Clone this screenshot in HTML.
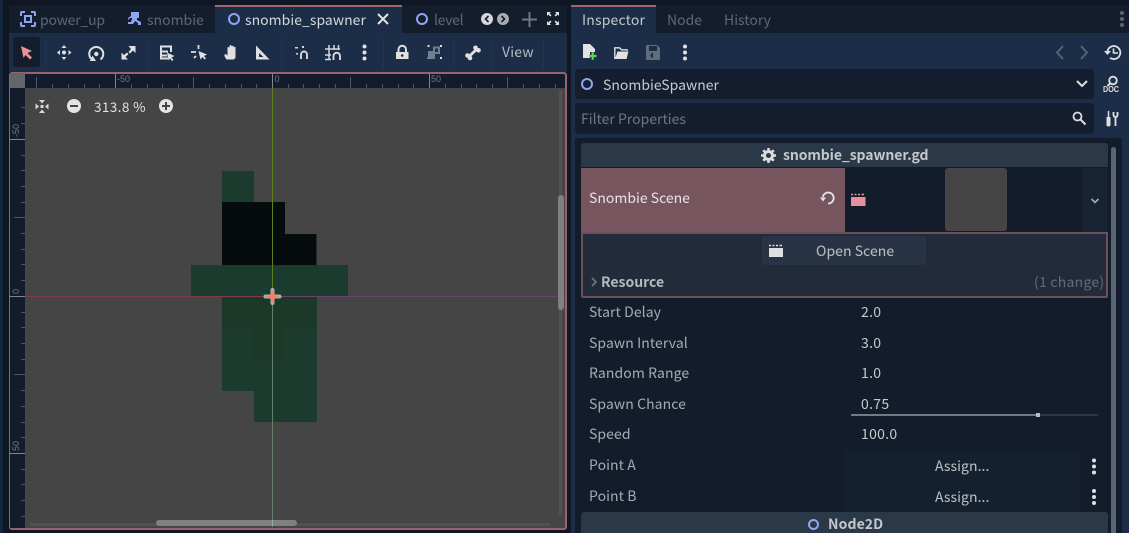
<!DOCTYPE html>
<html><head><meta charset="utf-8">
<style>
html,body{margin:0;padding:0;background:#0f1724;}
#r{position:relative;width:1129px;height:533px;overflow:hidden;background:#0f1724;font-family:"Noto Sans CJK JP","Liberation Sans",sans-serif;font-size:14px;}
#r div,#r svg{position:absolute;}
.t{white-space:nowrap;line-height:20px;height:20px;}
.l{color:#a5abb2;left:589px;letter-spacing:.08px;}
.v{color:#c6cace;left:861px;letter-spacing:.3px;}
.tab{color:#5b6877;letter-spacing:0;}
</style></head><body><div id="r">
<div style="left:0;top:0;width:3px;height:533px;background:#16263d"></div>
<div style="left:9px;top:5px;width:558px;height:28px;background:#141d2c"></div>
<div style="left:9px;top:33px;width:558px;height:39px;background:#1b2d47"></div>
<div style="left:215px;top:5px;width:187px;height:28px;background:#1b2d47"></div>
<div style="left:215px;top:5px;width:187px;height:2px;background:#a3656f"></div>
<svg style="left:20px;top:11px" width="16" height="16" viewBox="0 0 16 16"><path d="M1 5V2Q1 1 2 1H5M11 1H14Q15 1 15 2V5M15 11V14Q15 15 14 15H11M5 15H2Q1 15 1 14V11" fill="none" stroke="#8da5f3" stroke-width="2"/><rect x="5" y="5" width="6" height="6" fill="none" stroke="#8da5f3" stroke-width="2"/></svg>
<div class="t tab" style="left:40px;top:10px;letter-spacing:-.2px">power_up</div>
<svg style="left:128px;top:12px" width="14" height="14" viewBox="128 12 14 14"><path d="M131 12H139V18H137V20L141 22V25H138V23L135 21L133 24H128V22H131L132 19V18H130L128 20V18L131 16Z" fill="#8da5f3"/></svg>
<div class="t tab" style="left:147px;top:10px">snombie</div>
<svg style="left:227px;top:12px" width="14" height="14"><circle cx="7" cy="7" r="5" fill="none" stroke="#8da5f3" stroke-width="2"/></svg>
<div class="t" style="left:245px;top:10px;color:#d3d7dc;letter-spacing:.03px">snombie_spawner</div>
<svg style="left:377px;top:13px" width="12" height="12"><path d="M1 1L11 11M11 1L1 11" stroke="#e3e5e8" stroke-width="2"/></svg>
<svg style="left:415px;top:12px" width="14" height="14"><circle cx="7" cy="7" r="5" fill="none" stroke="#8da5f3" stroke-width="2"/></svg>
<div class="t tab" style="left:434px;top:10px;letter-spacing:-.3px">level</div>
<svg style="left:481px;top:13px" width="12" height="12"><circle cx="6" cy="6" r="6" fill="#d5d7da"/><path d="M7.500 3L4.500 6L7.500 9" fill="none" stroke="#141d2c" stroke-width="1.600"/></svg>
<svg style="left:497px;top:13px" width="12" height="12"><circle cx="6" cy="6" r="6" fill="#a9adb1"/><path d="M4.500 3L7.500 6L4.500 9" fill="none" stroke="#141d2c" stroke-width="1.600"/></svg>
<svg style="left:522px;top:12px" width="15" height="15"><path d="M7.500 0V15M0 7.500H15" stroke="#6f7884" stroke-width="2"/></svg>
<svg style="left:546px;top:11px" width="14" height="15" viewBox="0 0 14 15"><path d="M1 5V1H5L3.600 2.400L5.500 4.300L4.300 5.500L2.400 3.600ZM13 5V1H9L10.400 2.400L8.500 4.300L9.700 5.500L11.600 3.600ZM1 10V14H5L3.600 12.600L5.500 10.700L4.300 9.500L2.400 11.400ZM13 10V14H9L10.400 12.600L8.500 10.700L9.700 9.500L11.600 11.400Z" fill="#e0e0e0"/></svg>
<div style="left:13px;top:37px;width:27px;height:30px;background:#141d2b;border-radius:3px"></div>
<div style="left:45px;top:37px;width:1px;height:31px;background:#24364f"></div>
<div style="left:147px;top:37px;width:1px;height:31px;background:#24364f"></div>
<div style="left:281px;top:37px;width:1px;height:31px;background:#24364f"></div>
<div style="left:383px;top:37px;width:1px;height:31px;background:#24364f"></div>
<div style="left:453px;top:37px;width:1px;height:31px;background:#24364f"></div>
<div style="left:491px;top:37px;width:1px;height:31px;background:#24364f"></div>
<div style="left:543px;top:37px;width:1px;height:31px;background:#24364f"></div>
<svg style="left:0;top:0;width:600px;height:80px" width="600" height="80">
<path d="M21 46L32 51L27.500 53L32 57.500L30 59.500L25.500 55L23.500 58Z" fill="#e7919e"/>
<g fill="#e0e0e0"><path d="M64 45L66.500 48H61.500ZM64 60L61.500 57H66.500ZM57 52.500L60 50V55ZM71.500 52.500L68.500 50V55Z"/><circle cx="64" cy="52.500" r="2"/></g>
<path d="M92 59.500A7 7 0 1 1 100.500 59.500" fill="none" stroke="#e0e0e0" stroke-width="2"/><circle cx="96.300" cy="54" r="2.200" fill="#e0e0e0"/><path d="M90 61H96L92.500 55.500Z" fill="#e0e0e0"/>
<path d="M128.500 46H135.500V53L133 50.500L130 53.500L128.500 52L131 49ZM128 59.500H121.500V52.500L124 55L127 52.500L128.500 54L125.500 57Z" fill="#e0e0e0"/>
<path d="M160 45.500H172V52H170V47.500H162V50.500H168V52.500H162V54.500H167V56.500H162V57.500H168V59.500H160Z" fill="#e0e0e0"/><path d="M167 52.500L174.500 56L171.500 57.500L173.500 60L172 61L170 58.500L168.500 60.500Z" fill="#e0e0e0"/>
<path d="M198.500 45V49M191 52H196M194 58L196 56" fill="none" stroke="#e0e0e0" stroke-width="1.800"/><path d="M198.500 51L207 54.500L204 56L206 58.500L204.500 59.500L202.500 57L200.500 59.500Z" fill="#e0e0e0"/>
<g transform="translate(1.500 -.5)"><path d="M225 60C223 57 222 55 224 54.500L226 56V48.500A1 1 0 0 1 228 48.500V46.500A1 1 0 0 1 230 46.500V47A1 1 0 0 1 232 47.500V48A1 1 0 0 1 234 48.500V57Q234 60 231 60Z" fill="#e0e0e0"/></g>
<path d="M256 45.500V59.500H269.500ZM259 53L263.500 57H259Z" fill="#e0e0e0" fill-rule="evenodd"/>
<path d="M301 59V54.500A3 3 0 0 1 307 54.500V59" fill="none" stroke="#d8d8d8" stroke-width="1.900"/><path d="M295 47H298V48.500H295ZM296 53H298V54.500H296ZM302 46H304V48H302Z" fill="#d8d8d8"/>
<path d="M325 49H340M325 55H331M329 45V60M334 45V50M338.500 45V50M325 59.500H331" fill="none" stroke="#d8d8d8" stroke-width="1.500"/><path d="M333.500 60V56A3.200 3.200 0 0 1 340 56V60" fill="none" stroke="#d8d8d8" stroke-width="1.900"/>
<g fill="#e0e0e0"><circle cx="364.500" cy="46.500" r="2"/><circle cx="364.500" cy="52.500" r="2"/><circle cx="364.500" cy="58.500" r="2"/></g>
<path d="M396 52H408.500V59H396Z" fill="#e0e0e0"/><path d="M398.500 52V49.500A3.700 3.700 0 0 1 406 49.500V52" fill="none" stroke="#e0e0e0" stroke-width="2"/><circle cx="402.200" cy="55.500" r="1.300" fill="#1b2d47"/>
<path d="M427.500 45H429.500V47H427.500ZM440 45H442V47H440ZM427.500 57H429.500V59H427.500ZM440 57H442V59H440Z" fill="#e0e0e0"/><path d="M433 46.500H440V54H435V59H428V51H433Z" fill="#6f7f90"/><path d="M435 48.500V52H438V48.500Z" fill="#1b2d47"/>
<g fill="#e0e0e0"><path d="M470 57.500L468 55.500L476 48L478 50Z"/><circle cx="467.500" cy="55.500" r="2.300"/><circle cx="470" cy="58" r="2.300"/><circle cx="475.500" cy="47.800" r="2.300"/><circle cx="478.500" cy="50.300" r="2.300"/></g>
</svg>
<div class="t" style="left:502px;top:42px;color:#b6bbc1;letter-spacing:.2px">View</div>
<div style="left:9px;top:72px;width:558px;height:458px;box-sizing:border-box;border:1px solid #96636f;border-width:2px 2px 2px 1px;border-radius:3px;background:#131c2c"></div>
<div style="left:10px;top:73px;width:15px;height:15px;background:#626569"></div>
<div style="left:25px;top:88px;width:540px;height:440px;background:#454545"></div>
<svg style="left:0;top:0" width="570" height="533" id="ruler">
<g stroke="#4c5866" stroke-width="1">
<path d="M36.500 84V88M52.500 84V88M68.500 84V88M84.500 84V88M99.500 84V88M131.500 84V88M147.500 84V88M162.500 84V88M178.500 84V88M209.500 84V88M225.500 84V88M241.500 84V88M256.500 84V88M288.500 84V88M303.500 84V88M319.500 84V88M335.500 84V88M366.500 84V88M382.500 84V88M398.500 84V88M413.500 84V88M445.500 84V88M461.500 84V88M476.500 84V88M492.500 84V88M523.500 84V88M539.500 84V88M555.500 84V88"/>
<path d="M36.500 77V88M193.500 77V88M350.500 77V88M507.500 77V88"/>
<path d="M21 107.500H25M21 123.500H25M21 155.500H25M21 170.500H25M21 186.500H25M21 202.500H25M21 233.500H25M21 249.500H25M21 264.500H25M21 280.500H25M21 312.500H25M21 327.500H25M21 343.500H25M21 359.500H25M21 390.500H25M21 406.500H25M21 422.500H25M21 437.500H25M21 469.500H25M21 484.500H25M21 500.500H25M21 516.500H25"/>
<path d="M14 217.500H25M14 374.500H25"/>
</g>
<g stroke="#7c8794" stroke-width="1"><path d="M115.500 74V88M272.500 74V88M429.500 74V88M9 139.500H25M9 296.500H25M9 453.500H25"/></g>
<g fill="#6e7885" font-size="9" font-family="'Liberation Sans',sans-serif"><text x="117" y="82">-50</text><text x="274.500" y="82">0</text><text x="431" y="82">50</text>
<text transform="translate(19 137) rotate(-90)">-50</text><text transform="translate(19 294) rotate(-90)">0</text><text transform="translate(19 451) rotate(-90)">50</text></g>
<!-- sprite -->
<rect x="222" y="171" width="32" height="31" fill="#1b3b2e"/>
<path d="M222 202H285V234H316.500V265H222Z" fill="#060c0d"/>
<rect x="191" y="265" width="157" height="31" fill="#1b3b2e"/>
<path d="M222 297H317V422H254V391H222Z" fill="#1b3b2e"/>
<path d="M222 297H317V328H285V359H254V328H222Z" fill="#1c3829"/>
<path d="M25 296.500H272" stroke="#7e3d4a" stroke-width="1"/>
<path d="M272 296.500H565" stroke="#6b4275" stroke-width="1"/>
<path d="M272.500 88V296" stroke="#5d7f1e" stroke-width="1"/>
<path d="M272.500 296V527" stroke="#63806b" stroke-width="1"/>
<!-- origin -->
<path d="M272.500 290V303M265.500 296.500H279.500" stroke="#a8b0a8" stroke-width="4" stroke-linecap="round"/>
<path d="M272.500 290.500V302.500M266.500 296.500H278.500" stroke="#e8806f" stroke-width="1.600"/>
<circle cx="272.500" cy="296.500" r="3.300" fill="#ef8070"/>
<!-- zoom widgets -->
<g fill="#d8d8d8"><path d="M39 100H45L42 103.500ZM39 113H45L42 109.500ZM35.500 103.500V109.500L39 106.500ZM48.500 103.500V109.500L45 106.500Z"/><rect x="40.500" y="105" width="3" height="3"/></g>
<circle cx="74" cy="106" r="7" fill="#e4e4e4"/><rect x="70" y="105" width="8" height="2" fill="#454545"/>
<circle cx="166" cy="106" r="7" fill="#e4e4e4"/><path d="M162 106H170M166 102V110" stroke="#454545" stroke-width="2"/>
<!-- scrollbars -->
<rect x="30" y="523" width="520" height="3" fill="#525252" rx="1"/>
<rect x="156" y="520" width="141" height="6" rx="3" fill="#808080"/>
<rect x="559" y="90" width="3" height="425" fill="#525252"/>
<rect x="558" y="195" width="6" height="115" rx="3" fill="#808080"/>
<path d="M272.500 520V526" stroke="#9aa89e" stroke-width="1"/>
</svg>
<div class="t" style="left:94px;top:96px;color:#e2e2e2;font-size:13.500px;letter-spacing:.4px">313.8 %</div>

<!-- Inspector -->
<div style="left:571px;top:5px;width:558px;height:28px;background:#141d2c"></div>
<div style="left:571px;top:33px;width:558px;height:500px;background:#1b2d47"></div>
<div style="left:571px;top:5px;width:85px;height:28px;background:#1b2d47"></div>
<div style="left:571px;top:5px;width:85px;height:2px;background:#a3656f"></div>
<div class="t" style="left:582px;top:10px;color:#c3c8cd;letter-spacing:.17px">Inspector</div>
<div class="t tab" style="left:667px;top:10px">Node</div>
<div class="t tab" style="left:724px;top:10px">History</div>
<svg style="left:1118px;top:10px" width="8" height="18"><g fill="#5c6673"><circle cx="4" cy="3" r="2"/><circle cx="4" cy="9" r="2"/><circle cx="4" cy="15" r="2"/></g></svg>
<svg style="left:570px;top:33px" width="559" height="36">
<path d="M13 11H20L25 16V19H20V25H13Z" fill="#e2e2e2"/><path d="M19 23H26.500M22.700 19.200V26.800" stroke="#5fd35f" stroke-width="2.200" fill="none"/>
<path d="M44.800 26V14.800H49.500L51.500 16.800H57V18" fill="none" stroke="#e2e2e2" stroke-width="1.400"/><path d="M47.500 18.500H58.500L56.500 26H45Z" fill="#e2e2e2"/>
<path d="M77 12H87L90 15V26Q90 27 89 27H77Q76 27 76 26V13Q76 12 77 12ZM79 13V18H87V13ZM83 20A2.500 2.500 0 1 0 83.010 25Z" fill="#5f6d7d" fill-rule="evenodd"/>
<g fill="#e0e0e0"><circle cx="115" cy="13.500" r="2"/><circle cx="115" cy="19.500" r="2"/><circle cx="115" cy="25.500" r="2"/></g>
<path d="M493 13L487 19.500L493 26M511 13L517 19.500L511 26" fill="none" stroke="#5b6775" stroke-width="1.800"/>
<path d="M537.500 18A6.500 6.500 0 1 1 540 24.800" fill="none" stroke="#e0e0e0" stroke-width="1.800"/><path d="M534 18H541L537.500 22Z" fill="#e0e0e0"/><path d="M543.500 15.500V20H548" fill="none" stroke="#e0e0e0" stroke-width="1.600"/>
</svg>
<div style="left:575px;top:69px;width:519px;height:30px;background:#141e2e;border-radius:3px"></div>
<svg style="left:580px;top:77px" width="14" height="14"><circle cx="7" cy="7" r="5" fill="none" stroke="#8da5f3" stroke-width="2"/></svg>
<div class="t" style="left:603px;top:75px;color:#c6cacf;letter-spacing:0">SnombieSpawner</div>
<svg style="left:1076px;top:80px" width="12" height="8"><path d="M1 1L6 6L11 1" fill="none" stroke="#e0e0e0" stroke-width="2"/></svg>
<svg style="left:1102px;top:75px" width="19" height="18" viewBox="0 0 19 18"><circle cx="11" cy="5.500" r="3.800" fill="none" stroke="#e0e0e0" stroke-width="1.800"/><path d="M8.300 8.200L5.500 11" stroke="#e0e0e0" stroke-width="2"/><text x="1" y="17" font-size="8" font-weight="700" fill="#e0e0e0" font-family="'Liberation Sans',sans-serif" textLength="16" lengthAdjust="spacingAndGlyphs">DOC</text></svg>
<div style="left:575px;top:103px;width:519px;height:31px;background:#141e2e;border-radius:3px"></div>
<div class="t" style="left:581px;top:109px;color:#6d7783;letter-spacing:0">Filter Properties</div>
<svg style="left:1072px;top:111px" width="15" height="15"><circle cx="5.500" cy="5.500" r="4" fill="none" stroke="#dcdcdc" stroke-width="1.800"/><path d="M8.500 8.500L13.500 13.500" stroke="#dcdcdc" stroke-width="2"/></svg>
<svg style="left:1105px;top:111px" width="15" height="16" viewBox="0 0 15 16"><path d="M3.500 0V6" stroke="#e0e0e0" stroke-width="1.500"/><path d="M1.500 6H5.500V14Q5.500 15.500 3.500 15.500Q1.500 15.500 1.500 14Z" fill="#e0e0e0"/><path d="M8.500 1V4Q8.500 6 10.500 6V15M12.500 1V4Q12.500 6 10.500 6" fill="none" stroke="#e0e0e0" stroke-width="1.800"/></svg>

<div style="left:575px;top:138px;width:547px;height:395px;background:#131c2b"></div>
<div style="left:581px;top:143px;width:527px;height:24px;background:#2a3848;border-radius:3px 3px 0 0"></div>
<svg style="left:761px;top:148px" width="15" height="15" viewBox="0 0 15 15"><circle cx="7.500" cy="7.500" r="4" fill="none" stroke="#dcdcdc" stroke-width="3"/><path d="M7.500 0V15M0 7.500H15M2.200 2.200L12.800 12.800M12.800 2.200L2.200 12.800" stroke="#dcdcdc" stroke-width="2.500" stroke-dasharray="2.500 10 2.500 5"/></svg>
<div class="t" style="left:783px;top:145px;color:#c3c8cd;font-weight:700;letter-spacing:-.1px">snombie_spawner.gd</div>
<div style="left:581px;top:168px;width:264px;height:65px;background:#76555f"></div>
<div class="t" style="left:589px;top:188px;color:#e8e4e5;letter-spacing:0">Snombie Scene</div>
<svg style="left:820px;top:191px" width="16" height="15" viewBox="0 0 16 15"><path d="M8 12.500A5.500 5.500 0 1 0 2.800 6" fill="none" stroke="#e8e4e5" stroke-width="1.800"/><path d="M0 6.500H6L3 10.500Z" fill="#e8e4e5"/></svg>
<div style="left:845px;top:168px;width:237px;height:64px;background:#131c2b;border-radius:3px 0 0 3px"></div>
<div style="left:1082px;top:168px;width:26px;height:64px;background:#172233"></div>
<div style="left:945px;top:168px;width:62px;height:63px;background:#454545;border-radius:3px"></div>
<svg style="left:851px;top:193px" width="15" height="14"><path d="M0 1H2M3.500 1H5.500M7 1H9M10.500 1H13" stroke="#e7919e" stroke-width="1.500" transform="translate(0 .5)"/><rect x="0" y="4" width="14.500" height="9" fill="#e7919e"/></svg>
<svg style="left:1089px;top:197px" width="12" height="8"><path d="M2.500 2L6 5.500L9.500 2" fill="none" stroke="#a4abb3" stroke-width="1.600"/></svg>
<div style="left:581px;top:232px;width:527px;height:66px;box-sizing:border-box;background:#212b3a;border:2px solid #6e505c;border-radius:0 0 2px 2px"></div>
<div style="left:762px;top:236px;width:164px;height:29px;background:#283445;border-radius:3px"></div>
<svg style="left:768px;top:244px" width="16" height="15"><path d="M1 1H3M4.500 1H6.500M8 1H10M11.500 1H14" stroke="#e0e0e0" stroke-width="1.500" transform="translate(0 .5)"/><rect x="1" y="4" width="14" height="9" fill="#e0e0e0"/></svg>
<div class="t" style="left:816px;top:241px;color:#bcc0c5;letter-spacing:.05px">Open Scene</div>
<svg style="left:590px;top:277px" width="8" height="10"><path d="M2 1L6 5L2 9" fill="none" stroke="#6b7582" stroke-width="1.800"/></svg>
<div class="t" style="left:601px;top:272px;color:#b5babf;font-weight:700;letter-spacing:0">Resource</div>
<div class="t" style="left:1034px;top:272px;color:#626c79;letter-spacing:.25px">(1 change)</div>

<div class="t l" style="top:302px">Start Delay</div><div class="t v" style="top:302px">2.0</div>
<div class="t l" style="top:333px">Spawn Interval</div><div class="t v" style="top:333px">3.0</div>
<div class="t l" style="top:363px">Random Range</div><div class="t v" style="top:363px">1.0</div>
<div class="t l" style="top:394px">Spawn Chance</div><div class="t v" style="top:394px">0.75</div>
<div style="left:851px;top:414px;width:247px;height:2px;background:#2c3745"></div>
<div style="left:851px;top:414px;width:187px;height:2px;background:#707a85"></div>
<div style="left:1036px;top:413px;width:4px;height:4px;background:#b8bcc0"></div>
<div class="t l" style="top:424px">Speed</div><div class="t v" style="top:424px">100.0</div>
<div class="t l" style="top:455px">Point A</div>
<div class="t l" style="top:485.500px">Point B</div>
<div style="left:845px;top:451px;width:235px;height:61px;background:#15202f"></div>
<div class="t" style="left:935px;top:456px;color:#bcc0c5;letter-spacing:.05px">Assign...</div>
<div class="t" style="left:935px;top:487px;color:#bcc0c5;letter-spacing:.05px">Assign...</div>
<svg style="left:1090px;top:458px" width="8" height="48"><g fill="#e0e0e0"><circle cx="4" cy="2.500" r="2"/><circle cx="4" cy="8.500" r="2"/><circle cx="4" cy="14.500" r="2"/><circle cx="4" cy="33" r="2"/><circle cx="4" cy="39" r="2"/><circle cx="4" cy="45" r="2"/></g></svg>
<div style="left:581px;top:512px;width:527px;height:21px;background:#2a3848;border-radius:3px 3px 0 0"></div>
<svg style="left:807px;top:518px" width="13" height="13"><circle cx="6.500" cy="6.500" r="4.500" fill="none" stroke="#8da5f3" stroke-width="2"/></svg>
<div class="t" style="left:828px;top:514px;color:#c3c8cd;font-weight:700;letter-spacing:.1px">Node2D</div>
<div style="left:1111px;top:147px;width:5px;height:386px;background:#5a6675;border-radius:3px 3px 0 0"></div>
</div></body></html>
